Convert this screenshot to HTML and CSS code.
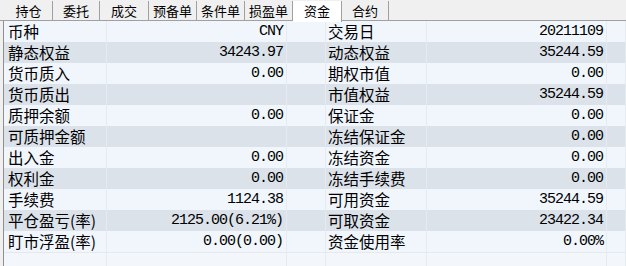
FILE: index.html
```html
<!DOCTYPE html>
<html>
<head>
<meta charset="utf-8">
<link rel="stylesheet" href="styles.css">
</head>
<body>
<div class="tabs">
  <div class="tab w48">持仓</div>
  <div class="tab w47">委托</div>
  <div class="tab w49">成交</div>
  <div class="tab w48">预备单</div>
  <div class="tab w48">条件单</div>
  <div class="tab w48">损盈单</div>
  <div class="tab w49 active">资金</div>
  <div class="tab w47">合约</div>
</div>
<div class="panel">
  <div class="grid">
    <div class="row"><div class="c lab">币种</div><div class="c num">CNY</div><div class="c"></div><div class="c lab">交易日</div><div class="c num">20211109</div><div class="c"></div></div>
    <div class="row"><div class="c lab">静态权益</div><div class="c num">34243.97</div><div class="c"></div><div class="c lab">动态权益</div><div class="c num">35244.59</div><div class="c"></div></div>
    <div class="row"><div class="c lab">货币质入</div><div class="c num">0.00</div><div class="c"></div><div class="c lab">期权市值</div><div class="c num">0.00</div><div class="c"></div></div>
    <div class="row"><div class="c lab">货币质出</div><div class="c num"></div><div class="c"></div><div class="c lab">市值权益</div><div class="c num">35244.59</div><div class="c"></div></div>
    <div class="row"><div class="c lab">质押余额</div><div class="c num">0.00</div><div class="c"></div><div class="c lab">保证金</div><div class="c num">0.00</div><div class="c"></div></div>
    <div class="row"><div class="c lab">可质押金额</div><div class="c num"></div><div class="c"></div><div class="c lab">冻结保证金</div><div class="c num">0.00</div><div class="c"></div></div>
    <div class="row"><div class="c lab">出入金</div><div class="c num">0.00</div><div class="c"></div><div class="c lab">冻结资金</div><div class="c num">0.00</div><div class="c"></div></div>
    <div class="row"><div class="c lab">权利金</div><div class="c num">0.00</div><div class="c"></div><div class="c lab">冻结手续费</div><div class="c num">0.00</div><div class="c"></div></div>
    <div class="row"><div class="c lab">手续费</div><div class="c num">1124.38</div><div class="c"></div><div class="c lab">可用资金</div><div class="c num">35244.59</div><div class="c"></div></div>
    <div class="row"><div class="c lab">平仓盈亏(率)</div><div class="c num">2125.00(6.21%)</div><div class="c"></div><div class="c lab">可取资金</div><div class="c num">23422.34</div><div class="c"></div></div>
    <div class="row"><div class="c lab">盯市浮盈(率)</div><div class="c num">0.00(0.00)</div><div class="c"></div><div class="c lab">资金使用率</div><div class="c num">0.00%</div><div class="c"></div></div>
    <div class="row empty"><div class="c"></div><div class="c"></div><div class="c"></div><div class="c"></div><div class="c"></div><div class="c"></div></div>
  </div>
</div>
</body>
</html>
```
FILE: styles.css
```css
html, body {
  margin: 0;
  padding: 0;
  width: 626px;
  height: 266px;
  overflow: hidden;
  background: #f0f0f0;
}
.tabs {
  display: flex;
  height: 21px;
  padding-left: 5px;
  border-bottom: 1px solid #a0a0a0;
  box-sizing: border-box;
  background: #f0f0f0;
}
.tab {
  box-sizing: border-box;
  height: 20px;
  margin-top: 1px;
  border-right: 1px solid #a0a0a0;
  font-family: "Noto Sans CJK SC", sans-serif;
  font-size: 13px;
  line-height: 20px;
  text-align: center;
  color: #000;
}
.w47 { width: 47px; }
.w48 { width: 48px; }
.w49 { width: 49px; }
.tab.active {
  background: #ffffff;
  height: 21px;
  margin-bottom: -1px;
  position: relative;
}
.panel {
  margin-left: 3px;
  border-left: 1px solid #8f8f8f;
  height: 245px;
  background: #f3f7fc;
  overflow: hidden;
}
.grid {
  display: flex;
  flex-direction: column;
}
.row {
  display: grid;
  grid-template-columns: 103px 180px 39px 101px 180px 1fr;
  height: 21px;
  background: #f1f6fd;
}
.row:nth-child(even) {
  background: #dce2ea;
}
.row.empty {
  background: #f3f7fc;
  border-top: 1px solid #e4e9f0;
}
.c {
  box-sizing: border-box;
  border-right: 1px solid #e6ebf2;
  height: 21px;
  line-height: 21px;
  white-space: nowrap;
  color: #000;
}
.lab {
  font-family: "Noto Sans CJK SC", sans-serif;
  font-size: 15.5px;
  padding-left: 4px;
}
.row .c:nth-child(4) {
  padding-left: 2px;
}
.num {
  font-family: "Liberation Mono", monospace;
  font-size: 15px;
  letter-spacing: -1px;
  text-align: right;
  padding-right: 3px;
}
```
